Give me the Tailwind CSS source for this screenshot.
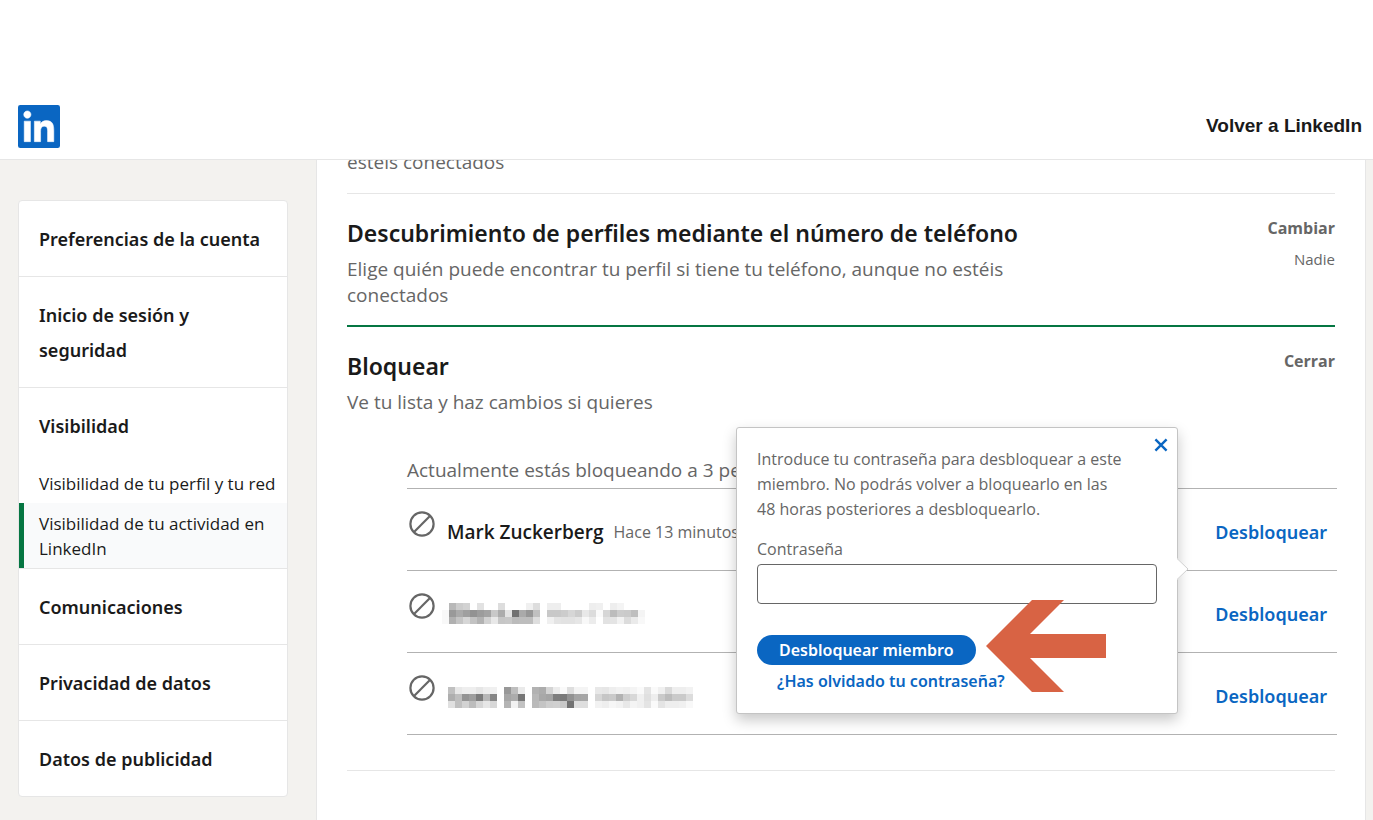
<!DOCTYPE html>
<html lang="es">
<head>
<meta charset="utf-8">
<meta name="viewport" content="width=device-width, initial-scale=1">
<title>Visibilidad | LinkedIn</title>
<script src="https://cdn.jsdelivr.net/npm/@tailwindcss/browser@4"></script>
</head>
<body class="flex h-screen flex-col overflow-hidden bg-[#f3f2ef] font-['Open_Sans','Noto_Sans',sans-serif] text-[#1a1a1a]">

<header class="relative z-10 flex shrink-0 items-center justify-between border-b border-[#e6e6e6] bg-white pt-[105px] pr-[11px] pb-[11px] pl-[18px]">
  <a href="#" aria-label="LinkedIn">
    <svg class="block h-[43px] w-[42px]" viewBox="0 0 24 24" preserveAspectRatio="none" aria-hidden="true">
      <rect width="24" height="24" rx="1.3" fill="#0a66c2"/>
      <path fill="#fff" stroke="#fff" stroke-width=".3" d="M20.447 20.452h-3.554v-5.569c0-1.328-.027-3.037-1.852-3.037-1.853 0-2.136 1.445-2.136 2.939v5.667H9.351V9h3.414v1.561h.046c.477-.9 1.637-1.85 3.37-1.85 3.601 0 4.267 2.37 4.267 5.455v6.286zM5.337 7.433c-1.144 0-2.063-.926-2.063-2.065 0-1.138.92-2.063 2.063-2.063 1.14 0 2.064.925 2.064 2.063 0 1.139-.925 2.065-2.064 2.065zm1.782 13.019H3.555V9h3.564v11.452z"/>
    </svg>
  </a>
  <a href="#" class="font-['Liberation_Sans',Arial,sans-serif] text-[19px] font-bold">Volver a LinkedIn</a>
</header>

<div class="flex min-h-0 flex-1 pr-[7px]">
  <aside class="w-[316px] shrink-0 pt-10 pr-7 pl-[18px]">
    <nav aria-label="Configuración" class="divide-y divide-[#e6e6e6] overflow-hidden rounded border border-[#e6e6e6] bg-white font-['Noto_Sans',sans-serif] text-[18px] leading-[35px] font-semibold">
      <a href="#" class="block px-5 pt-[21px] pb-[19px]">Preferencias de la cuenta</a>
      <a href="#" class="block px-5 pt-[21px] pb-[19px]">Inicio de sesión y seguridad</a>
      <div>
        <a href="#" class="block px-5 pt-[21px] pb-[19px]">Visibilidad</a>
        <div class="font-['Open_Sans',sans-serif] text-[17px] leading-[25px] font-normal">
          <a href="#" class="block pt-2 pr-2 pb-[7px] pl-5">Visibilidad de tu perfil y tu red</a>
          <a href="#" aria-current="page" class="block border-l-5 border-[#057642] bg-[#f9fafb] pt-2 pr-5 pb-[7px] pl-[15px]">Visibilidad de tu actividad en LinkedIn</a>
        </div>
      </div>
      <a href="#" class="block px-5 pt-[21px] pb-[19px]">Comunicaciones</a>
      <a href="#" class="block px-5 pt-[21px] pb-[19px]">Privacidad de datos</a>
      <a href="#" class="block px-5 pt-[21px] pb-[19px]">Datos de publicidad</a>
    </nav>
  </aside>

  <main class="-mt-3 min-w-0 flex-1 border-x border-[#e6e6e6] bg-white px-[30px]">
    <p class="border-b border-[#e6e6e6] pt-px pb-[18px] text-[19px] leading-[26px] text-[#666]">estéis conectados</p>

    <section class="flex justify-between border-b-2 border-[#057642] pt-[23px] pb-[17px]">
      <div class="max-w-[700px]">
        <h2 class="font-['Noto_Sans',sans-serif] text-[23px] leading-8 font-semibold">Descubrimiento de perfiles mediante el número de teléfono</h2>
        <p class="mt-[7px] text-[19px] leading-[26px] text-[#666]">Elige quién puede encontrar tu perfil si tiene tu teléfono, aunque no estéis conectados</p>
      </div>
      <div class="-mt-px flex flex-col items-end gap-[7px] text-[#666]">
        <button type="button" class="text-[16px] leading-6 font-bold">Cambiar</button>
        <p class="text-[15px] leading-6">Nadie</p>
      </div>
    </section>

    <section class="border-b border-[#e6e6e6] pt-[23px] pb-[35px]">
      <div class="flex justify-between">
        <div>
          <h2 class="font-['Noto_Sans',sans-serif] text-[23px] leading-8 font-semibold">Bloquear</h2>
          <p class="mt-[7px] text-[19px] leading-[26px] text-[#666]">Ve tu lista y haz cambios si quieres</p>
        </div>
        <button type="button" class="-mt-px self-start text-[16px] leading-6 font-bold text-[#666]">Cerrar</button>
      </div>

      <div class="relative mt-[42px] -mr-0.5 ml-[60px]">
        <p class="border-b border-[#b2b2b2] pb-[5px] text-[19px] leading-[26px] text-[#666]">Actualmente estás bloqueando a 3 personas</p>
        <ul class="text-[19px] leading-[26px]">
          <li class="flex items-start border-b border-[#b2b2b2] pt-[30px] pr-2.5 pb-[25px] pl-0.5">
            <svg class="-mt-2 size-[26px] shrink-0" viewBox="0 0 26 26" fill="none" stroke="#666" stroke-width="2.2" aria-hidden="true"><circle cx="13" cy="13" r="11.6"/><path d="M4.8 21.2 21.2 4.8"/></svg>
            <span class="ml-3 font-semibold">Mark Zuckerberg</span>
            <span class="ml-2.5 text-[16px] text-[#666]">Hace 13 minutos</span>
            <button type="button" class="ml-auto font-['Noto_Sans',sans-serif] text-[18px] font-semibold text-[#0a66c2]">Desbloquear</button>
          </li>
          <li class="flex items-start border-b border-[#b2b2b2] pt-[30px] pr-2.5 pb-[25px] pl-0.5">
            <svg class="-mt-2 size-[26px] shrink-0" viewBox="0 0 26 26" fill="none" stroke="#666" stroke-width="2.2" aria-hidden="true"><circle cx="13" cy="13" r="11.6"/><path d="M4.8 21.2 21.2 4.8"/></svg>
            <svg class="mt-0.5 ml-[7px] h-[21px] w-[203px]" role="img" aria-label="Nombre oculto" shape-rendering="crispEdges" data-rows="ff b8 cc d2 ff e2 ff ff dd ff ff ff f0 dd ff ee ee ff ff ff ff ee f0 ff ee f4 ff ff ff|f8 99 aa 9f 92 9c a3 c8 ac e4 72 aa 97 c0 ff c8 c8 cc d6 cc e8 dc fa d6 bc cc ca be f4|f8 b0 c4 d6 c2 b2 d2 e8 c6 c8 bb bd bd de ff f0 e4 e2 e2 e6 f8 ec ff e2 e4 f2 dc ea f8"></svg>
            <button type="button" class="ml-auto font-['Noto_Sans',sans-serif] text-[18px] font-semibold text-[#0a66c2]">Desbloquear</button>
          </li>
          <li class="flex items-start border-b border-[#b2b2b2] pt-[30px] pr-2.5 pb-[25px] pl-0.5">
            <svg class="-mt-2 size-[26px] shrink-0" viewBox="0 0 26 26" fill="none" stroke="#666" stroke-width="2.2" aria-hidden="true"><circle cx="13" cy="13" r="11.6"/><path d="M4.8 21.2 21.2 4.8"/></svg>
            <svg class="mt-1 ml-[13px] h-[21px] w-[245px]" role="img" aria-label="Nombre oculto" shape-rendering="crispEdges" data-rows="c0 e8 ee ee e6 ee f0 ff 98 be ea ff b2 ac d4 ec fa de f4 f4 ff e8 e6 ee f2 f0 f4 fa e4 fa f0 da ee ee f2|ae be 94 9e 7c b8 86 ff a6 ac 76 ff b8 a8 a4 7e 7a 92 a4 a6 ff d6 c6 ca b2 ce d8 f0 e0 ee ca bc ca ca dc|e0 c0 d2 bc d6 e6 d8 ff b4 f2 c2 ff ba c4 ce d0 c8 72 de de ff f2 ee f6 f2 e8 f4 f0 e4 fa e4 ee ee f0 f8"></svg>
            <button type="button" class="ml-auto font-['Noto_Sans',sans-serif] text-[18px] font-semibold text-[#0a66c2]">Desbloquear</button>
          </li>
        </ul>

        <!-- Password pop-over, laid over the list -->
        <form role="dialog" aria-label="Desbloquear miembro" class="absolute -top-[30px] right-[159px] w-[442px] rounded-[3px] border border-[#c4c4c4] bg-white px-5 pt-[19px] pb-[19px] text-[#666] shadow-[0_6px_14px_rgba(0,0,0,0.22)]">
          <button type="button" aria-label="Cerrar" class="absolute top-2.5 right-[9px] text-[#0a66c2]">
            <svg class="block size-3.5" viewBox="0 0 14 14" fill="none" stroke="currentColor" stroke-width="2.4" aria-hidden="true"><path d="m1.4 1.4 11.2 11.2M12.6 1.4 1.4 12.6"/></svg>
          </button>
          <p class="max-w-[380px] text-[16px] leading-[25px]">Introduce tu contraseña para desbloquear a este miembro. No podrás volver a bloquearlo en las 48&nbsp;horas posteriores a desbloquearlo.</p>
          <label for="pwd" class="mt-[15px] block text-[16px] leading-6">Contraseña</label>
          <input id="pwd" type="password" class="mt-[3px] block h-10 w-full rounded border border-[#666] bg-white px-3">
          <button type="submit" class="mt-[31px] block rounded-full bg-[#0a66c2] px-[22px] font-['Noto_Sans',sans-serif] text-[16px] leading-[30px] font-semibold text-white">Desbloquear miembro</button>
          <a href="#" class="mt-1 ml-5 block w-fit font-['Noto_Sans',sans-serif] text-[16px] leading-[25px] font-semibold text-[#0a66c2]">¿Has olvidado tu contraseña?</a>
          <svg class="absolute top-[130px] -right-3 h-[22px] w-3" viewBox="0 0 12 22" aria-hidden="true"><path fill="#fff" d="M0 0 11 11 0 22z"/><path fill="none" stroke="#d0d0d0" d="M0 .5 11 11 0 21.5"/></svg>
          <svg class="absolute top-[172px] left-[249px] h-[92px] w-[120px]" viewBox="0 0 120 92" aria-hidden="true"><path fill="#d86344" d="M0 46 46 0h32L44 34h76v24H44l34 34H46z"/></svg>
        </form>
      </div>
    </section>
  </main>
</div>

<script>
/* Pixelated names: 7px grey cells, one hex value for each cell */
document.querySelectorAll('svg[data-rows]').forEach(function (svg) {
  svg.dataset.rows.split('|').forEach(function (row, y) {
    row.split(' ').forEach(function (v, x) {
      var r = document.createElementNS('http://www.w3.org/2000/svg', 'rect');
      r.setAttribute('x', x * 7);
      r.setAttribute('y', y * 7);
      r.setAttribute('width', 7);
      r.setAttribute('height', 7);
      r.setAttribute('fill', '#' + v + v + v);
      svg.appendChild(r);
    });
  });
});
</script>
</body>
</html>
